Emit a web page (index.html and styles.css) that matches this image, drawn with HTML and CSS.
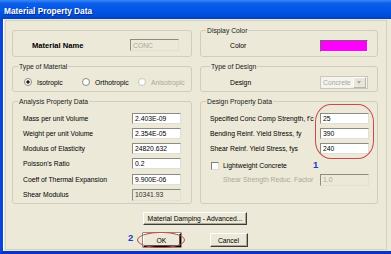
FILE: index.html
```html
<!DOCTYPE html>
<html lang="en">
<head>
    <meta charset="UTF-8">
    <title>Material Property Data</title>
    <link rel="stylesheet" href="styles.css">
</head>
<body>
    <div class="window">
        <div class="titlebar"><span class="title">Material Property Data</span></div>
        <div class="client">
            <div class="frame">
                <div class="groups">
                    <div class="group g-name">
                        <span class="lbl">Material Name</span>
                        <span class="field disabled">CONC</span>
                    </div>
                    <div class="group g-color">
                        <span class="group-title">Display Color</span>
                        <span class="lbl">Color</span>
                        <span class="swatch"></span>
                    </div>

                    <div class="group g-mat">
                        <span class="group-title">Type of Material</span>
                        <label class="opt opt-1"><span class="radio checked"></span>Isotropic</label>
                        <label class="opt opt-2"><span class="radio"></span>Orthotropic</label>
                        <label class="opt off"><span class="radio"></span>Anisotropic</label>
                    </div>
                    <div class="group g-design">
                        <span class="group-title title-design">Type of Design</span>
                        <span class="lbl">Design</span>
                        <span class="select"><span class="select-text">Concrete</span><span class="select-btn"></span></span>
                    </div>

                    <div class="group g-analysis">
                        <span class="group-title">Analysis Property Data</span>
                        <div class="row"><span class="lbl">Mass per unit Volume</span><span class="field">2.403E-09</span></div>
                        <div class="row"><span class="lbl">Weight per unit Volume</span><span class="field">2.354E-05</span></div>
                        <div class="row"><span class="lbl">Modulus of Elasticity</span><span class="field">24820.632</span></div>
                        <div class="row"><span class="lbl">Poisson's Ratio</span><span class="field">0.2</span></div>
                        <div class="row"><span class="lbl">Coeff of Thermal Expansion</span><span class="field">9.900E-06</span></div>
                        <div class="row"><span class="lbl">Shear Modulus</span><span class="field readonly">10341.93</span></div>
                    </div>
                    <div class="group g-props">
                        <span class="group-title">Design Property Data</span>
                        <div class="row"><span class="lbl">Specified Conc Comp Strength, f'c</span><span class="field">25</span></div>
                        <div class="row"><span class="lbl">Bending Reinf. Yield Stress, fy</span><span class="field">390</span></div>
                        <div class="row"><span class="lbl">Shear Reinf. Yield Stress, fys</span><span class="field">240</span></div>
                        <div class="check-row"><span class="checkbox"></span>Lightweight Concrete</div>
                        <div class="sub-row"><span class="lbl">Shear Strength Reduc. Factor</span><span class="field disabled">1.0</span></div>
                        <span class="ring ring-fields"></span>
                        <span class="marker marker-1">1</span>
                    </div>
                </div>

                <div class="damping-row">
                    <button class="btn btn-damping">Material Damping - Advanced...</button>
                </div>
                <div class="actions">
                    <span class="marker marker-2">2</span>
                    <span class="ok-wrap">
                        <button class="btn btn-ok">OK</button>
                        <span class="ring ring-ok"></span>
                    </span>
                    <button class="btn btn-cancel">Cancel</button>
                </div>
            </div>
        </div>
    </div>
</body>
</html>
```

FILE: styles.css
```css
body {
    margin: 0;
    font-family: "Liberation Sans", Arial, sans-serif;
    font-size: 6.8px;
    color: #000;
    background: #ECE9D8;
    overflow: hidden;
}
.window {
    width: 391px;
    height: 254px;
    box-sizing: border-box;
    display: flex;
    flex-direction: column;
    background: #ECE9D8;
    border-left: 3px solid #0A45D8;
    border-bottom: 3px solid #0733C8;
}
.titlebar {
    height: 19px;
    flex: none;
    margin-left: -3px;
    padding-left: 4px;
    display: flex;
    align-items: center;
    background: linear-gradient(#3A86F8, #0C5FEA 18%, #0055E3 60%, #004BD6 85%, #0340C0);
}
.title {
    color: #fff;
    font-weight: bold;
    font-size: 8.3px;
    padding-top: 2px;
    text-shadow: 1px 1px 0 #0A2A90;
}
.client {
    flex: 1;
    display: flex;
    border-left: 1px solid #fff;
    padding: 1px 4px 1px 1px;
}
.frame {
    flex: 1;
    border: 1px solid #D6D2C2;
    padding: 9px 0 0 6px;
}
.groups {
    display: grid;
    grid-template-columns: 180px 178px;
    grid-template-rows: 27px 26px 103px;
    column-gap: 8px;
    row-gap: 9px;
}
.group {
    position: relative;
    box-sizing: border-box;
    border: 1px solid #D0CDBE;
    border-radius: 3px;
}
.group-title {
    position: absolute;
    top: -5px;
    left: 5px;
    padding: 0 1px;
    line-height: 9px;
    background: #ECE9D8;
    color: #1a1a1a;
}
.title-design {
    left: 9px;
}

/* fields */
.field {
    box-sizing: border-box;
    width: 49px;
    height: 11px;
    display: flex;
    align-items: center;
    padding-left: 2px;
    background: #fff;
    border: 1px solid;
    border-color: #8C8C84 #E2E0D6 #E2E0D6 #8C8C84;
}
.field.disabled {
    background: #ECE9D8;
    color: #ACA899;
}
.field.readonly {
    background: #ECE9D8;
    color: #333;
}

.g-name {
    display: flex;
    align-items: center;
    padding: 3px 0 0 19px;
}
.g-name .lbl {
    width: 98px;
    font-weight: bold;
    font-size: 7.6px;
}
.g-name .field {
    height: 12px;
}
.g-color {
    display: flex;
    align-items: center;
    padding: 4px 0 0 29px;
}
.g-color .lbl {
    width: 90px;
}
.swatch {
    box-sizing: border-box;
    width: 48px;
    height: 12px;
    background: #FF00FF;
    border: 1px solid;
    border-color: #6C6C64 #F4F2EA #F4F2EA #6C6C64;
}

.g-mat {
    display: flex;
    align-items: center;
    padding: 6px 0 0 11px;
}
.opt {
    display: flex;
    align-items: center;
    gap: 5px;
}
.opt-1 {
    width: 58px;
}
.opt-2 {
    width: 56px;
}
.opt.off {
    color: #ACA899;
}
.radio {
    box-sizing: border-box;
    width: 8px;
    height: 8px;
    border-radius: 50%;
    border: 1px solid #8A8A82;
    background: #fff;
}
.radio.checked {
    background: radial-gradient(circle, #222 0 1.4px, #fff 1.9px);
}
.opt.off .radio {
    border-color: #C8C5B6;
}

.g-design {
    display: flex;
    align-items: center;
    padding: 6px 0 0 29px;
}
.g-design .lbl {
    width: 90px;
}
.select {
    box-sizing: border-box;
    width: 48px;
    height: 13px;
    display: flex;
    align-items: center;
    border: 1px solid #C9C7BA;
    background: #F4F3EE;
    color: #ACA899;
}
.select-text {
    flex: 1;
    padding-left: 2px;
}
.select-btn {
    width: 11px;
    height: 9px;
    margin-right: 1px;
    background: #E8E6DC;
    border: 1px solid;
    border-color: #fff #B8B5A6 #B8B5A6 #fff;
    position: relative;
}
.select-btn::after {
    content: "";
    position: absolute;
    left: 3px;
    top: 3px;
    border-left: 2.5px solid transparent;
    border-right: 2.5px solid transparent;
    border-top: 3px solid #ACA899;
}

.row {
    display: flex;
    align-items: center;
    height: 15.3px;
}
.g-analysis {
    padding: 8.4px 0 0 10px;
}
.g-analysis .lbl {
    width: 109px;
}
.g-analysis .row:last-child .field {
    height: 12px;
}
.g-props {
    padding: 8.4px 0 0 9px;
}
.g-props .lbl {
    width: 110px;
}
.check-row {
    display: flex;
    align-items: center;
    gap: 4px;
    height: 14px;
    margin-top: 2.7px;
    padding-left: 1px;
}
.checkbox {
    box-sizing: border-box;
    width: 8px;
    height: 8px;
    background: #fff;
    border: 1px solid;
    border-color: #7F7F78 #DCDAD0 #DCDAD0 #7F7F78;
}
.sub-row {
    display: flex;
    align-items: center;
    height: 14px;
    padding-left: 13px;
}
.g-props .sub-row .lbl {
    width: 97px;
    color: #ACA899;
}
.sub-row .field {
    height: 12px;
}

/* annotations */
.ring {
    position: absolute;
    box-sizing: border-box;
    border: 1px solid #C84A4A;
    border-radius: 50%;
    pointer-events: none;
}
.ring-fields {
    left: 114px;
    top: 2px;
    width: 59px;
    height: 55px;
    border-radius: 16px / 18px;
}
.marker {
    position: absolute;
    color: #1A3CCB;
    font-weight: bold;
    font-size: 9.5px;
    line-height: 10px;
}
.marker-1 {
    left: 112px;
    top: 58px;
}

/* buttons */
.btn {
    box-sizing: border-box;
    padding: 0;
    font-family: inherit;
    font-size: 6.8px;
    color: #000;
    background: #ECE9D8;
    border: 1px solid;
    border-color: #fff #3C3C3C #3C3C3C #fff;
    box-shadow: inset -1px -1px #ACA899;
}
.damping-row {
    width: 366px;
    display: flex;
    justify-content: center;
    margin-top: 8px;
}
.btn-damping {
    width: 104px;
    height: 13px;
}
.actions {
    position: relative;
    width: 366px;
    display: flex;
    justify-content: center;
    gap: 29px;
    margin-top: 8px;
}
.marker-2 {
    left: 116px;
    top: 0;
}
.ok-wrap {
    position: relative;
    display: flex;
}
.btn-ok,
.btn-cancel {
    width: 38px;
    height: 14px;
}
.btn-ok {
    border-color: #fff #000 #000 #fff;
    box-shadow: inset -1px -1px #555, 0 0 0 0.5px #333;
}
.ring-ok {
    left: -6px;
    top: -1px;
    width: 48px;
    height: 16px;
}
```
